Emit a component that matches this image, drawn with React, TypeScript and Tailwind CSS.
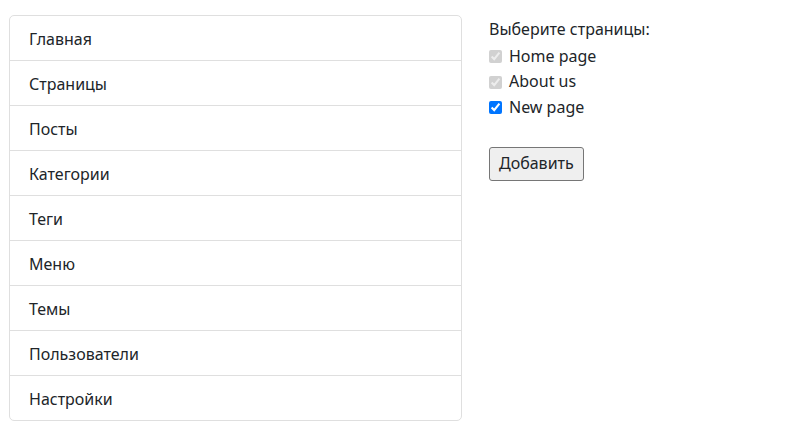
const menu = [
  'Главная',
  'Страницы',
  'Посты',
  'Категории',
  'Теги',
  'Меню',
  'Темы',
  'Пользователи',
  'Настройки',
]

const pages = [
  { title: 'Home page', disabled: true },
  { title: 'About us', disabled: true },
  { title: 'New page', disabled: false },
]

export default function App() {
  return (
    <div
      className="flex items-start gap-[27px] px-[9px] pt-[15px] text-[16px] text-[#212529] bg-white min-h-[448px]"
      style={{ fontFamily: '"Noto Sans", "Open Sans", sans-serif' }}
    >
      <ul className="w-[453px] shrink-0 border border-[#dfdfdf] rounded-[5px] overflow-hidden">
        {menu.map((item, i) => (
          <li
            key={item}
            className={`flex items-center px-[19px] pt-[2px] ${
              i > 0 ? 'h-[45px] border-t border-[#dfdfdf]' : 'h-[44px]'
            }`}
          >
            {item}
          </li>
        ))}
      </ul>

      <form className="pt-[2px] leading-[25.7px]">
        <div className="mb-[1px]">Выберите страницы:</div>
        {pages.map((p) => (
          <label key={p.title} className="flex items-center gap-[7px]">
            <input
              type="checkbox"
              defaultChecked
              disabled={p.disabled}
              className="w-[13px] h-[13px] m-0"
            />
            {p.title}
          </label>
        ))}
        <button
          type="button"
          className="mt-[26px] h-[34px] px-[9px] bg-[#efefef] border border-[#767676] rounded-[3px] text-[16px]"
        >
          Добавить
        </button>
      </form>
    </div>
  )
}
